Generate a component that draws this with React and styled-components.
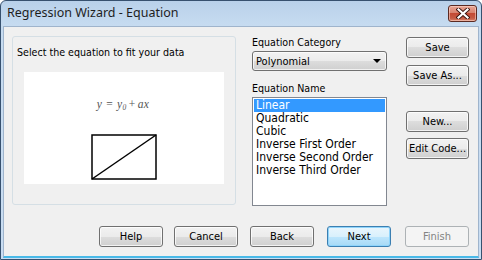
import React from "react";
import styled, { createGlobalStyle, css } from "styled-components";

const Global = createGlobalStyle`
  html, body { margin: 0; padding: 0; background: #fff; }
  body { font-family: "DejaVu Sans Condensed", "Liberation Sans", sans-serif; font-size: 11px; color: #000; }
  * { box-sizing: border-box; }
`;

const Window = styled.div`
  width: 482px;
  height: 260px;
  display: flex;
  flex-direction: column;
  border: 1px solid #37516f;
  border-radius: 6px 6px 0 0;
  background: linear-gradient(#b9d1ea 0px, #c6dbf0 24px, #c9ddf2 100%);
  overflow: hidden;
`;

const TitleBar = styled.div`
  height: 25px;
  flex: none;
  display: flex;
  align-items: flex-start;
  justify-content: space-between;
  padding: 0 4px 0 6px;
`;

const Title = styled.div`
  font-family: "Noto Sans", "Liberation Sans", sans-serif;
  font-size: 12.5px;
  line-height: 16px;
  padding-top: 4px;
  color: #1e1e1e;
`;

const CloseButton = styled.div`
  margin-top: 4px;
  width: 29px;
  height: 17px;
  border: 1px solid #5b2a22;
  border-radius: 3px;
  background: linear-gradient(#e8a493 0%, #d88470 45%, #c44a34 50%, #c45a43 80%, #d9826a 100%);
  box-shadow: inset 0 0 0 1px rgba(255, 220, 210, 0.55);
  display: flex;
  align-items: center;
  justify-content: center;
`;

const Client = styled.div`
  flex: 1;
  margin: 0 2px 1px 2px;
  background: #f0f0f0;
  border: 1px solid #9fb4cc;
  border-bottom: 2px solid #48b9e8;
  display: flex;
  flex-direction: column;
`;

const Main = styled.div`
  display: flex;
  align-items: flex-start;
  padding: 9px 0 0 8px;
`;

const Panel = styled.div`
  width: 224px;
  height: 169px;
  border: 1px solid #d5dfe5;
  border-radius: 3px;
  padding: 9px 0 0 4px;
  display: flex;
  flex-direction: column;
`;

const Prompt = styled.div`
  font-size: 10.6px;
  line-height: 13px;
`;

const Preview = styled.div`
  margin: 13px 0 0 7px;
  width: 200px;
  height: 112px;
  background: #fff;
  display: flex;
  flex-direction: column;
  align-items: center;
`;

const Equation = styled.div`
  margin-top: 25px;
  margin-left: -2px;
  font-family: "Liberation Serif", serif;
  font-style: italic;
  font-size: 11.5px;
  line-height: 15px;
  color: #555;
  letter-spacing: 0.4px;
  sub { font-size: 7.5px; vertical-align: -2px; }
  b { font-style: normal; font-weight: normal; margin: 0 ${(p) => 4}px; }
  i { font-style: normal; margin: 0 2px; }
`;

const Mid = styled.div`
  margin-left: 16px;
  width: 135px;
  display: flex;
  flex-direction: column;
`;

const Label = styled.div`
  font-size: 10.6px;
  line-height: 12px;
  margin-top: ${(p) => p.$top || 0}px;
`;

const Select = styled.div`
  margin-top: 3px;
  height: 20px;
  border: 1px solid #707070;
  border-radius: 3px;
  background: linear-gradient(#f2f2f2 0%, #ebebeb 50%, #dddddd 50%, #cfcfcf 100%);
  box-shadow: inset 0 0 0 1px rgba(255, 255, 255, 0.7);
  display: flex;
  align-items: center;
  justify-content: space-between;
  padding: 0 5px 0 3px;
`;

const Arrow = styled.div`
  width: 0;
  height: 0;
  border-left: 4px solid transparent;
  border-right: 4px solid transparent;
  border-top: 4px solid #000;
`;

const List = styled.div`
  margin-top: 3px;
  height: 109px;
  border: 1px solid #828790;
  background: #fff;
  padding: 1px;
`;

const Item = styled.div`
  height: 13px;
  line-height: 13px;
  padding-left: 2px;
  font-size: 12px;
  ${(p) =>
    p.$selected &&
    css`
      background: #3399ff;
      color: #fff;
    `}
`;

const Side = styled.div`
  margin-left: 19px;
  margin-top: 1px;
  width: 63px;
  display: flex;
  flex-direction: column;
`;

const Button = styled.div`
  width: ${(p) => p.$w || 63}px;
  height: 21px;
  margin-top: ${(p) => p.$top || 0}px;
  margin-left: ${(p) => p.$left || 0}px;
  border: 1px solid #707070;
  border-radius: 3px;
  background: linear-gradient(#f2f2f2 0%, #ebebeb 50%, #dddddd 50%, #cfcfcf 100%);
  box-shadow: inset 0 0 0 1px rgba(255, 255, 255, 0.75);
  display: flex;
  align-items: center;
  justify-content: center;
  white-space: nowrap;
  line-height: 13px;
  ${(p) =>
    p.$default &&
    css`
      border-color: #3c7fb1;
      background: linear-gradient(#eaf6fd 0%, #d9f0fc 50%, #bee6fd 50%, #a7d9f5 100%);
      box-shadow: inset 0 0 0 1px #8fd4fb;
    `}
  ${(p) =>
    p.$disabled &&
    css`
      border-color: #adb2b5;
      background: #f4f4f4;
      box-shadow: none;
      color: #838383;
    `}
`;

const Footer = styled.div`
  margin-top: 20px;
  display: flex;
  padding-left: 95px;
`;

const items = [
  "Linear",
  "Quadratic",
  "Cubic",
  "Inverse First Order",
  "Inverse Second Order",
  "Inverse Third Order",
];

export default function App() {
  return (
    <>
      <Global />
      <Window>
        <TitleBar>
          <Title>Regression Wizard - Equation</Title>
          <CloseButton>
            <svg width="14" height="11" viewBox="0 0 14 11">
              <path d="M2.5 1.5 L11.5 9.5 M11.5 1.5 L2.5 9.5" stroke="#3a1510" strokeWidth="4" strokeLinecap="square" />
              <path d="M2.5 1.5 L11.5 9.5 M11.5 1.5 L2.5 9.5" stroke="#fff" strokeWidth="2.2" strokeLinecap="square" />
            </svg>
          </CloseButton>
        </TitleBar>
        <Client>
          <Main>
            <Panel>
              <Prompt>Select the equation to fit your data</Prompt>
              <Preview>
                <Equation>
                  y<b>=</b>y<sub>0</sub><i>+</i>ax
                </Equation>
                <svg width="66" height="46" viewBox="0 0 66 46" style={{ marginTop: 19 }}>
                  <rect x="1" y="1" width="64" height="44" fill="none" stroke="#000" strokeWidth="1.5" />
                  <line x1="1" y1="45" x2="65" y2="1" stroke="#000" strokeWidth="1.5" />
                </svg>
              </Preview>
            </Panel>
            <Mid>
              <Label $top={0}>Equation Category</Label>
              <Select>
                <span>Polynomial</span>
                <Arrow />
              </Select>
              <Label $top={11}>Equation Name</Label>
              <List>
                {items.map((t, i) => (
                  <Item key={t} $selected={i === 0}>
                    {t}
                  </Item>
                ))}
              </List>
            </Mid>
            <Side>
              <Button>Save</Button>
              <Button $top={7}>Save As...</Button>
              <Button $top={25}>New...</Button>
              <Button $top={6}>Edit Code...</Button>
            </Side>
          </Main>
          <Footer>
            <Button $w={64}>Help</Button>
            <Button $w={64} $left={11}>Cancel</Button>
            <Button $w={64} $left={12}>Back</Button>
            <Button $w={64} $left={13} $default>Next</Button>
            <Button $w={64} $left={14} $disabled>Finish</Button>
          </Footer>
        </Client>
      </Window>
    </>
  );
}
